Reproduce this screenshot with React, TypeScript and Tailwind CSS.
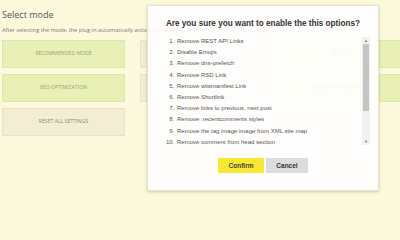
import React from "react";

const modes = [
  { label: "RECOMMENDED MODE", tone: "green" },
  { label: "", tone: "beige" },
  { label: "SELECT", tone: "green" },
  { label: "SEO OPTIMIZATION", tone: "green" },
  { label: "", tone: "beige" },
  { label: "SERVER OPTIMIZATION", tone: "green" },
  { label: "RESET ALL SETTINGS", tone: "beige" },
];

const options = [
  "Remove REST API Links",
  "Disable Emojis",
  "Remove dns-prefetch",
  "Remove RSD Link",
  "Remove wlwmanifest Link",
  "Remove Shortlink",
  "Remove links to previous, next post",
  "Remove .recentcomments styles",
  "Remove the tag image:image from XML site map",
  "Remove comment from head section",
];

const App = () => {
  return (
    <div className="relative w-[400px] h-[240px] overflow-hidden bg-[#fdf9dc] font-['Open_Sans','Liberation_Sans',sans-serif]">
      {/* Page behind the dialog */}
      <div className="pl-[2px] pt-[9px]">
        <h1 className="text-[9px] leading-[12px] text-[#555]">Select mode</h1>
        <p className="mt-[5px] text-[5.6px] leading-[8px] text-[#777] whitespace-nowrap">
          After selecting the mode, the plug-in automatically activates the necessary settings for the mode.
        </p>
        <div className="mt-[6px] grid grid-cols-[123px_123px_123px] gap-x-[15px] gap-y-[6px]">
          {modes.map((m, i) => (
            <div
              key={i}
              className={
                m.tone === "green"
                  ? "h-[28px] flex items-center justify-center border border-[#dfe6a8] bg-[#e9f0b6] text-[5px] text-[#999a7c] tracking-[0.1px]"
                  : "h-[28px] flex items-center justify-center border border-[#e8e3c6] bg-[#f2edd3] text-[5px] text-[#8c8a78] tracking-[0.1px]"
              }
            >
              {m.label}
            </div>
          ))}
        </div>
      </div>

      {/* Confirm dialog */}
      <div className="absolute left-[147px] top-[5px] w-[232px] h-[186px] bg-white/90 border border-[#e6e3d0] shadow-[0_1px_3px_rgba(120,115,80,0.35)]">
        <h2 className="mt-[12px] text-center text-[8.2px] leading-[12px] font-bold text-[#333] font-['Liberation_Sans',sans-serif]">
          Are you sure you want to enable the this options?
        </h2>
        <div className="mt-[7px] ml-[18px] w-[204px] h-[108px] flex">
          <ol className="flex-1 -mt-[1px] pl-[10px] list-decimal text-[6px] leading-[11.2px] text-[#555] font-['Liberation_Sans',sans-serif]">
            {options.map((o) => (
              <li key={o} className="pl-[1px]">{o}</li>
            ))}
          </ol>
          <div className="w-[8px] h-full bg-[#f1f1f1] flex flex-col items-center">
            <span className="h-[7px] flex items-center text-[4px] text-[#777]">▲</span>
            <div className="w-[6px] h-[67px] bg-[#c4c4c4]" />
            <div className="flex-1" />
            <span className="h-[7px] flex items-center text-[4px] text-[#777]">▼</span>
          </div>
        </div>
        <div className="mt-[13px] flex justify-center gap-[2px]">
          <button className="w-[46px] h-[15px] bg-[#f7e830] text-[6.5px] font-bold text-[#444] font-['Liberation_Sans',sans-serif]">
            Confirm
          </button>
          <button className="w-[42px] h-[15px] bg-[#dcdcdc] text-[6.5px] font-bold text-[#333] font-['Liberation_Sans',sans-serif]">
            Cancel
          </button>
        </div>
      </div>
    </div>
  );
};

export default App;
